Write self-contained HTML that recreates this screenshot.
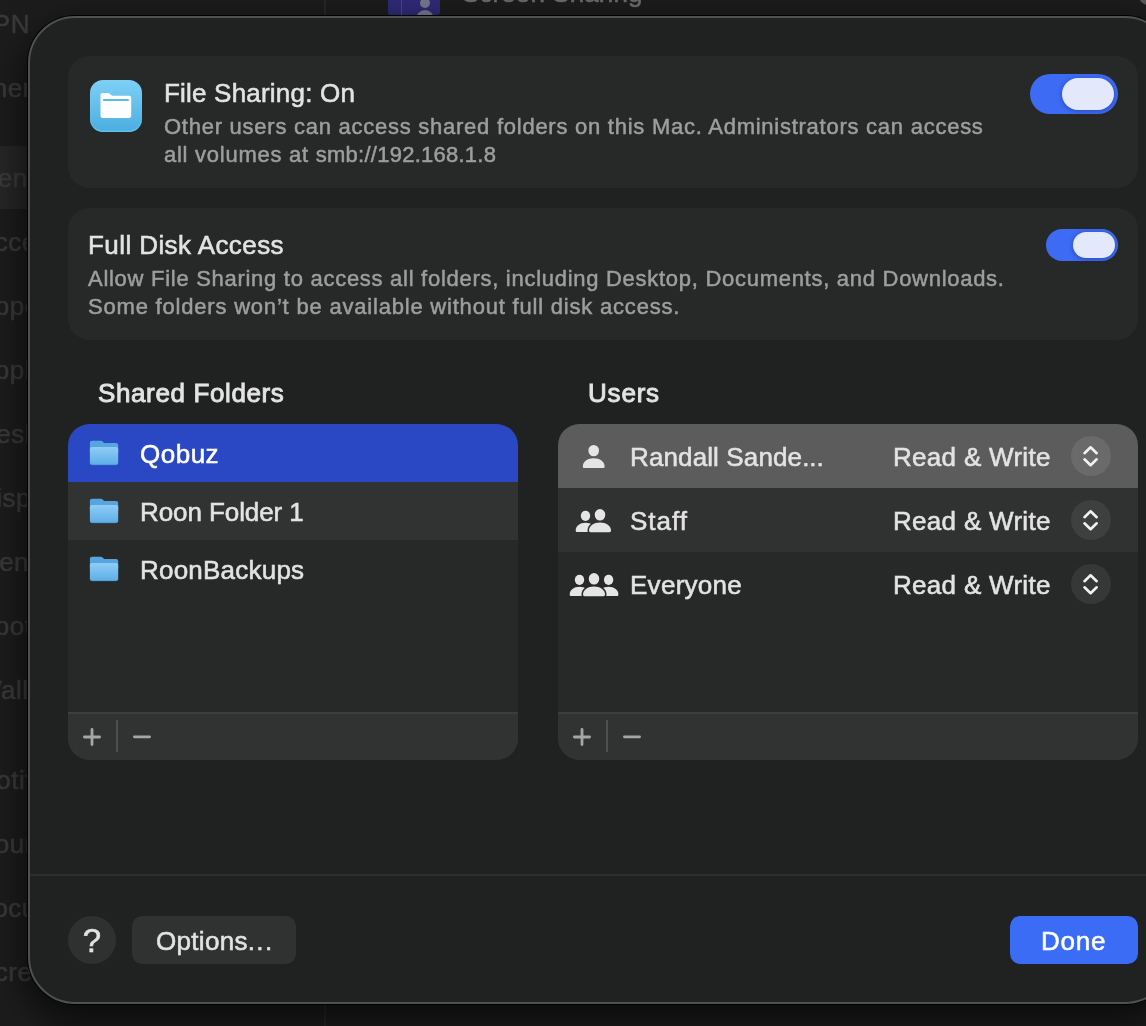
<!DOCTYPE html>
<html>
<head>
<meta charset="utf-8">
<title>File Sharing</title>
<style>
*{box-sizing:border-box;margin:0;padding:0}
html,body{width:1146px;height:1026px;overflow:hidden;background:#1c1c1c}
body{position:relative;font-family:"Liberation Sans",sans-serif;color:#e3e3e3;-webkit-font-smoothing:antialiased}
.abs{position:absolute}
.t,.sec,.sb{will-change:transform;-webkit-text-stroke:.55px}
.sec{-webkit-text-stroke:.5px}
.t{position:absolute;white-space:nowrap;font-size:26px;line-height:30px;color:#e3e3e3}
.sec{position:absolute;white-space:nowrap;font-size:22px;line-height:28px;color:#9d9e9d;letter-spacing:.72px}
/* background window */
#sidebar{left:0;top:0;width:325px;height:1026px;background:#1c1c1c}
#sidesel{left:-10px;top:146px;width:320px;height:63px;background:#262626;border-radius:10px}
.sb{position:absolute;white-space:nowrap;font-size:26px;line-height:30px;color:#3a3a3a;left:-23.5px;letter-spacing:.5px}
#sideline{left:324px;top:0;width:2px;height:1026px;background:#26262b}
#col2{left:365px;top:0;width:1px;height:16px;background:#1c1c1c}
/* dialog */
#dlg{left:28px;top:16px;width:1144px;height:988px;border-radius:47px;background:#202221;border:2px solid #4f5150;box-shadow:0 0 0 1px #000,0 14px 34px 4px rgba(0,0,0,.6)}
.card{position:absolute;left:68px;width:1070px;height:132px;border-radius:21.5px;background:#272928}
.list{position:absolute;top:424px;height:336px;border-radius:21.5px;background:#272928;overflow:hidden}
.row{position:absolute;left:0;right:0}
.foot{position:absolute;left:0;right:0;top:288px;height:48px;background:#313332;border-top:2px solid #3c3e3d}
.sepv{position:absolute;top:6px;width:2px;height:32px;background:#4e504f}
.pm{position:absolute;background:#aaa;border-radius:1.3px}
.toggle{position:absolute;background:#3d6bf3;}
.knob{position:absolute;background:#e3e9fb}
.circ{position:absolute;width:40px;height:40px;border-radius:20px}
</style>
</head>
<body>
<!-- dimmed background window -->
<div id="sidebar" class="abs"></div>
<div id="sidesel" class="abs"></div>
<div id="sideline" class="abs"></div>
<div class="sb" style="top:9.0px;left:-25px">VPN</div>
<div class="sb" style="top:73.0px;left:-25.5px">Energy</div>
<div class="sb" style="top:162.6px">General</div>
<div class="sb" style="top:226.6px">Accessibility</div>
<div class="sb" style="top:290.6px">Appearance</div>
<div class="sb" style="top:354.6px">Apple Intelligence</div>
<div class="sb" style="top:418.6px">Desktop &amp; Dock</div>
<div class="sb" style="top:482.6px">Displays</div>
<div class="sb" style="top:547.0px">Menu Bar</div>
<div class="sb" style="top:611.0px">Spotlight</div>
<div class="sb" style="top:675.0px">Wallpaper</div>
<div class="sb" style="top:765.3px">Notifications</div>
<div class="sb" style="top:829.3px">Sound</div>
<div class="sb" style="top:893.3px">Focus</div>
<div class="sb" style="top:957.3px">Screen Time</div>
<!-- background content peeking above the sheet -->
<div class="abs" style="left:388px;top:-37px;width:52px;height:52px;border-radius:0 0 3px 3px;background:#2f2a77"></div>
<div class="abs" style="left:401px;top:0;width:1px;height:15px;background:#4a468a"></div>
<div class="abs" style="left:420px;top:-2px;width:10px;height:10px;border-radius:5px;background:#77778c"></div>
<div class="abs" style="left:416px;top:10px;width:18px;height:12px;border-radius:9px 9px 0 0;background:#77778c"></div>
<div class="t" style="left:462px;top:-22px;color:#6c6c6c;letter-spacing:.1px">Screen Sharing</div>
<div class="abs" style="left:1139px;top:-14px;width:30px;height:19px;border-radius:9px;background:#585858"></div>


<!-- dialog sheet -->
<div id="dlg" class="abs"></div>

<!-- card 1 -->
<div class="card" style="top:56px"></div>
<div class="t" style="left:164px;top:78px;letter-spacing:.2px">File Sharing: On</div>
<div class="sec" style="left:164px;top:113px;letter-spacing:.745px">Other users can access shared folders on this Mac. Administrators can access<br>all volumes at <span style="letter-spacing:.25px">smb://192.168.1.8</span></div>

<!-- card 2 -->
<div class="card" style="top:208px"></div>
<div class="t" style="left:87.5px;top:230px;letter-spacing:.42px">Full Disk Access</div>
<div class="sec" style="left:88px;top:265px">Allow File Sharing to access all folders, including Desktop, Documents, and Downloads.<br><span style="letter-spacing:.8px">Some folders won’t be available without full disk access.</span></div>

<!-- app icon -->
<div class="abs" style="left:90px;top:80px;width:52px;height:52px;border-radius:13px;background:linear-gradient(#7ed0f5,#4aaee0);box-shadow:inset 0 -1px 1.5px rgba(130,225,255,.55)"></div>

<!-- toggles -->
<div class="toggle" style="left:1030px;top:74px;width:88px;height:40px;border-radius:20px"></div>
<div class="knob" style="left:1062px;top:78px;width:52px;height:32px;border-radius:16px;box-shadow:0 1px 5px rgba(10,20,90,.4)"></div>
<div class="toggle" style="left:1046px;top:229px;width:72px;height:32px;border-radius:16px"></div>
<div class="knob" style="left:1073px;top:232px;width:42px;height:26px;border-radius:13px;box-shadow:0 1px 5px rgba(10,20,90,.4)"></div>

<!-- section titles -->
<div class="t" id="h1" style="left:98px;top:378px;-webkit-text-stroke:.9px;letter-spacing:.62px">Shared Folders</div>
<div class="t" id="h2" style="left:588px;top:378px;-webkit-text-stroke:.9px;letter-spacing:.8px">Users</div>

<!-- shared folders list -->
<div class="list" style="left:68px;width:450px">
  <div class="row" style="top:0;height:58px;background:#2a48c4"></div>
  <div class="row" style="top:58px;height:58px;background:#313332"></div>
  <div class="foot">
    <div class="sepv" style="left:48px"></div>
  </div>
</div>
<div class="t" style="left:140px;top:439px;color:#fff;letter-spacing:.5px">Qobuz</div>
<div class="t" style="left:140px;top:497px;letter-spacing:-.08px">Roon Folder 1</div>
<div class="t" style="left:140px;top:555px;letter-spacing:.22px">RoonBackups</div>

<!-- users list -->
<div class="list" style="left:558px;width:580px">
  <div class="row" style="top:0;height:64px;background:#5c5c5c"></div>
  <div class="row" style="top:64px;height:64px;background:#303231"></div>
  <div class="foot">
    <div class="sepv" style="left:48px"></div>
  </div>
</div>
<div class="circ" style="left:1071px;top:436px;background:#6a6a6a"></div>
<div class="circ" style="left:1071px;top:500px;background:#3e403f"></div>
<div class="circ" style="left:1071px;top:564px;background:#363837"></div>
<div class="t" style="left:630px;top:442px;letter-spacing:.12px">Randall Sande<span style="letter-spacing:0">...</span></div>
<div class="t" style="left:630px;top:506px;letter-spacing:1px">Staff</div>
<div class="t" style="left:629.5px;top:570px;letter-spacing:.28px">Everyone</div>
<div class="t" style="left:893.4px;top:442px;letter-spacing:.3px">Read &amp; Write</div>
<div class="t" style="left:893.4px;top:506px;letter-spacing:.3px">Read &amp; Write</div>
<div class="t" style="left:893.4px;top:570px;letter-spacing:.3px">Read &amp; Write</div>

<!-- bottom bar -->
<div class="abs" style="left:30px;top:874px;width:1116px;height:2px;background:#2d2f2e"></div>
<div class="abs" style="left:68px;top:916px;width:48px;height:48px;border-radius:24px;background:#2f3130"></div>
<div class="t" style="left:68px;top:922px;width:48px;text-align:center;font-size:33px;line-height:38px;-webkit-text-stroke:.5px">?</div>
<div class="abs" style="left:132px;top:916px;width:164px;height:48px;border-radius:10.5px;background:#303231"></div>
<div class="t" style="left:155.5px;top:926px;letter-spacing:.3px">Options<span style="letter-spacing:1.4px">...</span></div>
<div class="abs" style="left:1010px;top:916px;width:128px;height:48px;border-radius:10.5px;background:#3a6cf6"></div>
<div class="t" style="left:1041.3px;top:926px;color:#fff;letter-spacing:.8px">Done</div>

<!-- icons -->
<svg class="abs" style="left:0;top:0" width="1146" height="1026" viewBox="0 0 1146 1026">
<defs>
<linearGradient id="ff" x1="0" y1="0" x2="0" y2="1"><stop offset="0" stop-color="#8fcdf6"/><stop offset="1" stop-color="#5eade7"/></linearGradient>
</defs>
<path d="M100.5 95.2C100.5 93.8 101.4 93 102.7 93H107.6C108.6 93 109.3 93.3 110 94L111 95C111.6 95.6 112.2 95.8 113 95.8H129C130.4 95.8 131.2 96.7 131.2 98V115.8C131.2 117.1 130.4 118 129 118H102.7C101.4 118 100.5 117.1 100.5 115.8Z" fill="#fdfeff"/>
<rect x="102.9" y="99" width="26.1" height="2" rx="1" fill="#5bb9e8"/>
<g transform="translate(89.9 440.8)"><path d="M0 2.2C0 .9 .9 0 2.2 0H10.6C11.6 0 12.2 .3 12.9 1L14.3 2.3H26.1C27.4 2.3 28.3 3.2 28.3 4.5V12H0Z" fill="#57a5de"/>
<path d="M0 8.4C0 7.1 .9 6.2 2.2 6.2H26.1C27.4 6.2 28.3 7.1 28.3 8.4V22C28.3 23.3 27.4 24.2 26.1 24.2H2.2C.9 24.2 0 23.3 0 22Z" fill="url(#ff)"/>
<path d="M.4 22.6C.8 23.5 1.4 23.9 2.2 23.9H26.1C26.9 23.9 27.5 23.5 27.9 22.6" fill="none" stroke="#4a94d4" stroke-width=".7"/></g>
<g transform="translate(89.9 498.8)"><path d="M0 2.2C0 .9 .9 0 2.2 0H10.6C11.6 0 12.2 .3 12.9 1L14.3 2.3H26.1C27.4 2.3 28.3 3.2 28.3 4.5V12H0Z" fill="#57a5de"/>
<path d="M0 8.4C0 7.1 .9 6.2 2.2 6.2H26.1C27.4 6.2 28.3 7.1 28.3 8.4V22C28.3 23.3 27.4 24.2 26.1 24.2H2.2C.9 24.2 0 23.3 0 22Z" fill="url(#ff)"/>
<path d="M.4 22.6C.8 23.5 1.4 23.9 2.2 23.9H26.1C26.9 23.9 27.5 23.5 27.9 22.6" fill="none" stroke="#4a94d4" stroke-width=".7"/></g>
<g transform="translate(89.9 556.8)"><path d="M0 2.2C0 .9 .9 0 2.2 0H10.6C11.6 0 12.2 .3 12.9 1L14.3 2.3H26.1C27.4 2.3 28.3 3.2 28.3 4.5V12H0Z" fill="#57a5de"/>
<path d="M0 8.4C0 7.1 .9 6.2 2.2 6.2H26.1C27.4 6.2 28.3 7.1 28.3 8.4V22C28.3 23.3 27.4 24.2 26.1 24.2H2.2C.9 24.2 0 23.3 0 22Z" fill="url(#ff)"/>
<path d="M.4 22.6C.8 23.5 1.4 23.9 2.2 23.9H26.1C26.9 23.9 27.5 23.5 27.9 22.6" fill="none" stroke="#4a94d4" stroke-width=".7"/></g>
<path d="M582.80 466.40C582.80 461.73 587.60 458.30 593.70 458.30C599.80 458.30 604.60 461.73 604.60 466.40C604.60 467.70 604.00 468.10 602.90 468.10L584.50 468.10C583.40 468.10 582.80 467.70 582.80 466.40Z" fill="#e4e5e4"/><ellipse cx="593.70" cy="450.60" rx="5.30" ry="5.70" fill="#e4e5e4"/>
<path d="M575.70 530.40C575.70 526.05 580.01 522.80 585.50 522.80C590.99 522.80 595.30 526.05 595.30 530.40C595.30 531.70 594.70 532.10 593.60 532.10L577.40 532.10C576.30 532.10 575.70 531.70 575.70 530.40Z" fill="#e4e5e4"/><ellipse cx="585.50" cy="515.85" rx="4.70" ry="5.05" fill="#e4e5e4"/>
<path d="M589.00 530.50C589.00 525.96 593.84 522.60 600.00 522.60C606.16 522.60 611.00 525.96 611.00 530.50C611.00 531.80 610.40 532.20 609.30 532.20L590.70 532.20C589.60 532.20 589.00 531.80 589.00 530.50Z" fill="#e4e5e4" stroke="#303231" stroke-width="3" paint-order="stroke"/><ellipse cx="600.00" cy="514.85" rx="5.30" ry="5.75" fill="#e4e5e4"/>
<path d="M569.70 594.40C569.70 590.05 574.01 586.80 579.50 586.80C584.99 586.80 589.30 590.05 589.30 594.40C589.30 595.70 588.70 596.10 587.60 596.10L571.40 596.10C570.30 596.10 569.70 595.70 569.70 594.40Z" fill="#e4e5e4"/><ellipse cx="579.50" cy="579.85" rx="4.70" ry="5.05" fill="#e4e5e4"/>
<path d="M598.80 594.40C598.80 590.05 603.11 586.80 608.60 586.80C614.09 586.80 618.40 590.05 618.40 594.40C618.40 595.70 617.80 596.10 616.70 596.10L600.50 596.10C599.40 596.10 598.80 595.70 598.80 594.40Z" fill="#e4e5e4"/><ellipse cx="608.60" cy="579.85" rx="4.70" ry="5.05" fill="#e4e5e4"/>
<path d="M583.00 594.50C583.00 589.96 587.84 586.60 594.00 586.60C600.16 586.60 605.00 589.96 605.00 594.50C605.00 595.80 604.40 596.20 603.30 596.20L584.70 596.20C583.60 596.20 583.00 595.80 583.00 594.50Z" fill="#e4e5e4" stroke="#272928" stroke-width="3" paint-order="stroke"/><ellipse cx="594.00" cy="578.85" rx="5.25" ry="5.75" fill="#e4e5e4"/>
<g transform="translate(1090.6 455.6)" fill="none" stroke="#f1f1f1" stroke-width="2.6" stroke-linecap="round" stroke-linejoin="round"><path d="M-6.1 -2.4L0 -8.3L6.1 -2.4"/><path d="M-6.1 3.7L0 9.6L6.1 3.7"/></g>
<g transform="translate(1090.6 519.6)" fill="none" stroke="#f1f1f1" stroke-width="2.6" stroke-linecap="round" stroke-linejoin="round"><path d="M-6.1 -2.4L0 -8.3L6.1 -2.4"/><path d="M-6.1 3.7L0 9.6L6.1 3.7"/></g>
<g transform="translate(1090.6 583.6)" fill="none" stroke="#f1f1f1" stroke-width="2.6" stroke-linecap="round" stroke-linejoin="round"><path d="M-6.1 -2.4L0 -8.3L6.1 -2.4"/><path d="M-6.1 3.7L0 9.6L6.1 3.7"/></g>
<g fill="none" stroke="#a5a7a6" stroke-width="2.8" stroke-linecap="round"><path d="M84.4 737H99.6M92 729.4V744.6M134.4 736.8H149.6"/><path d="M574.4 737H589.6M582 729.4V744.6M624.4 736.8H639.6"/></g>
</svg>
</body>
</html>
